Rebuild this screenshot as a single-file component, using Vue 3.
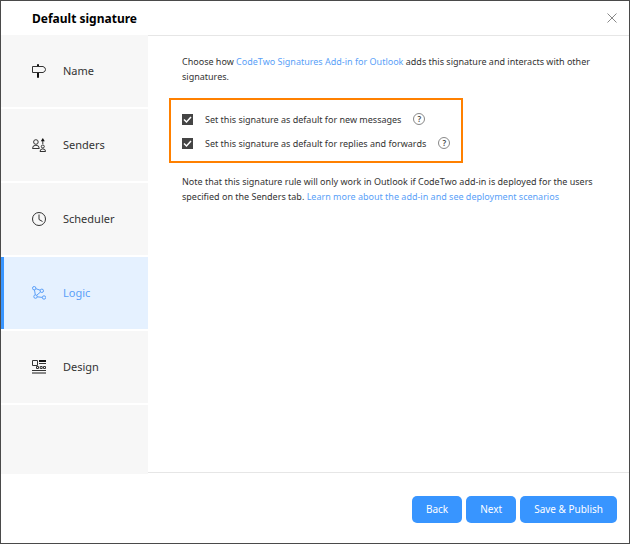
<script setup>
import { ref } from 'vue'

const tabs = ['Name', 'Senders', 'Scheduler', 'Logic', 'Design']
const active = ref('Logic')
const options = ref([
  { id: 'new', label: 'Set this signature as default for new messages', checked: true },
  { id: 'replies', label: 'Set this signature as default for replies and forwards', checked: true }
])
</script>

<template>
  <main class="dialog">
    <header class="title-bar">
      <h1>Default signature</h1>
      <button class="close" type="button" aria-label="Close">
        <svg width="10" height="10" viewBox="0 0 10 10"><path d="M0.5 0.5 9.5 9.5M9.5 0.5 0.5 9.5" /></svg>
      </button>
    </header>

    <div class="middle">
      <nav class="tabs">
        <button
          v-for="tab in tabs"
          :key="tab"
          type="button"
          class="tab"
          :class="{ active: tab === active }"
          @click="active = tab"
        >
          <svg v-if="tab === 'Name'" class="icon" viewBox="0 0 14 14">
            <path d="M.5 2.500h10.500q2.500.8 2.500 3t-2.500 3H.5z" />
            <path class="thick" d="M6 .3V2M6 9v4.800" />
          </svg>
          <svg v-else-if="tab === 'Senders'" class="icon" viewBox="0 0 14 14">
            <circle cx="3.900" cy="4" r="2.300" />
            <path d="M.5 10.500q0-3.300 3.400-3.300t3.400 3.300zM10.800 6V2" />
            <circle cx="10.800" cy="8.500" r="1.500" />
            <path d="M8 13.500q0-2.600 2.800-2.600t2.800 2.600z" />
            <path class="solid" d="M10.800 0 12.800 3.200H8.800z" />
          </svg>
          <svg v-else-if="tab === 'Scheduler'" class="icon" viewBox="0 0 14 14">
            <circle cx="7" cy="7" r="6.500" />
            <path d="M7 2.500v5l3.500 2" />
          </svg>
          <svg v-else-if="tab === 'Logic'" class="icon" viewBox="0 0 14 14">
            <circle cx="2.200" cy="2.200" r="1.700" />
            <circle cx="9.800" cy="4.800" r="1.700" />
            <circle cx="3.500" cy="10.600" r="1.700" />
            <circle cx="12" cy="11.500" r="1.700" />
            <path d="M3.900 2.700 8.100 4.200M2.500 3.900l.8 5M4.700 9.300l3.900-3.400M5.200 10.800l5.100.6" />
          </svg>
          <svg v-else class="icon" viewBox="0 0 14 14">
            <path d="M.5.500h5v5h-5z" />
            <path class="thick" d="M7 1h7" />
            <path d="M7 3.500h7" />
            <path d="M4.500 6.500h2v2h-2zM8.200 6.500h2v2h-2zM11.500 6.500h2v2h-2z" />
            <path d="M0 10.500h14" />
            <path class="soft" d="M0 13h14" />
          </svg>
          <span>{{ tab }}</span>
        </button>
        <div class="filler"></div>
      </nav>

      <section class="content">
        <p>
          Choose how <a href="#">CodeTwo Signatures Add-in for Outlook</a> adds this signature and
          interacts with other signatures.
        </p>
        <div class="options">
          <div v-for="option in options" :key="option.id" class="option">
            <input :id="option.id" v-model="option.checked" type="checkbox" />
            <label :for="option.id">{{ option.label }}</label>
            <button class="help" type="button" aria-label="Help">?</button>
          </div>
        </div>
        <p>
          Note that this signature rule will only work in Outlook if CodeTwo add-in is deployed for the
          users specified on the Senders tab.
          <a href="#">Learn more about the add-in and see deployment scenarios</a>
        </p>
      </section>
    </div>

    <footer class="actions">
      <button type="button">Back</button>
      <button type="button">Next</button>
      <button type="button">Save &amp; Publish</button>
    </footer>
  </main>
</template>

<style>
body {
  margin: 0;
}
</style>

<style scoped>
.dialog {
  box-sizing: border-box;
  min-height: 100vh;
  display: flex;
  flex-direction: column;
  border: 1px solid #4a4a4a;
  background: #fff;
  color: #333;
  font: 10px/15px "Noto Sans", "Open Sans", sans-serif;
}
button {
  font: inherit;
  color: inherit;
  border: 0;
  padding: 0;
  background: none;
  cursor: pointer;
}
a {
  color: #5a9ff8;
  text-decoration: none;
}
.title-bar {
  display: flex;
  align-items: center;
  justify-content: space-between;
  height: 34px;
  padding: 0 12px 0 31px;
}
h1 {
  margin: 0;
  color: #000;
  font-size: 12px;
  font-weight: 700;
}
.close {
  display: flex;
}
.close svg {
  fill: none;
  stroke: #888;
}
.middle {
  flex: 1;
  display: flex;
}
.tabs {
  width: 147px;
  flex: none;
  display: flex;
  flex-direction: column;
  gap: 2px;
}
.tab {
  box-sizing: border-box;
  height: 72px;
  display: flex;
  align-items: center;
  gap: 17px;
  padding-left: 28px;
  border-left: 3px solid #f7f7f7;
  background: #f7f7f7;
  font-size: 11px;
}
.tab span {
  padding-bottom: 2px;
}
.tab.active {
  border-color: #3895ff;
  background: #e5f1ff;
  color: #5a9ff8;
}
.icon {
  width: 14px;
  height: 14px;
  fill: none;
  stroke: currentColor;
}
.icon .thick {
  stroke: #111;
  stroke-width: 2;
}
.icon .soft {
  stroke: #888;
  stroke-width: 2;
}
.icon .solid {
  fill: #111;
  stroke: none;
}
.filler {
  flex: 1;
  background: #f7f7f7;
}
.content {
  flex: 1;
  padding: 18px 28px 0 34px;
  border-top: 1px solid #e6e6e6;
  border-bottom: 1px solid #e6e6e6;
  margin-bottom: 1px;
  font-size: 9px;
}
.content p {
  margin: 0;
}
.options {
  box-sizing: border-box;
  width: max-content;
  display: grid;
  gap: 8px;
  margin: 14px 0 11px -13px;
  padding: 11px 11px 10px;
  border: 2px solid #ff8000;
}
.option {
  display: flex;
  align-items: center;
  height: 16px;
}
.option input {
  appearance: none;
  box-sizing: border-box;
  width: 11px;
  height: 11px;
  margin: 0 12px 0 0;
  border: 1px solid #444;
}
.option input:checked {
  border: 0;
  background: #444 url("data:image/svg+xml,%3Csvg xmlns='http://www.w3.org/2000/svg' viewBox='0 0 11 11'%3E%3Cpath d='M2 5.500 4.500 8 9 3' fill='none' stroke='white' stroke-width='1.500'/%3E%3C/svg%3E") center / 11px 11px;
}
.help {
  box-sizing: border-box;
  width: 12px;
  height: 12px;
  margin-left: 12px;
  border: 1px solid #888;
  border-radius: 50%;
  color: #444;
  font-size: 8px;
  font-weight: 600;
  line-height: 10px;
}
.actions {
  display: flex;
  justify-content: flex-end;
  gap: 4px;
  padding: 22px 12px 20px;
}
.actions button {
  height: 27px;
  padding: 0 14px;
  border-radius: 5px;
  background: #3895ff;
  color: #fff;
}
</style>
